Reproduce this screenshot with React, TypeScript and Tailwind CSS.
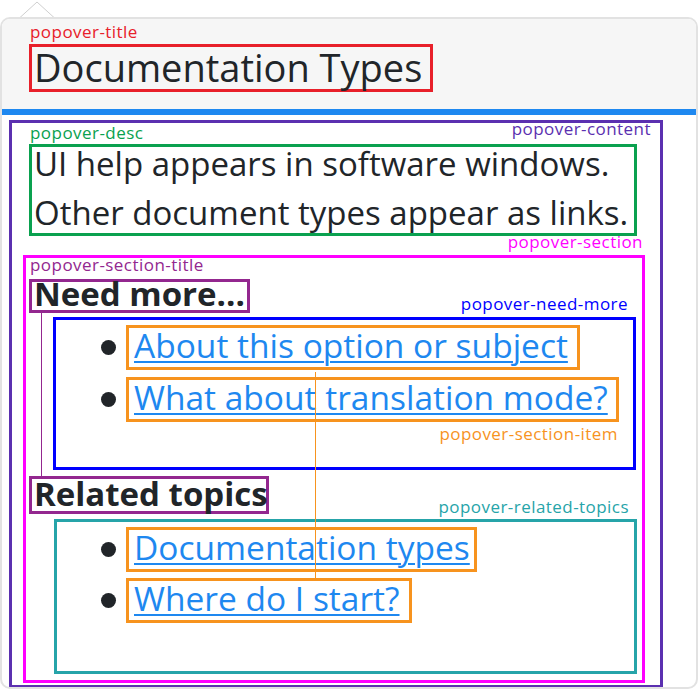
import React from 'react';

type ItemProps = {
  text: string;
  box: string;
  bullet: string;
  children?: React.ReactNode;
};

const label = 'whitespace-nowrap text-[17px] tracking-[0.45px]';

const Item: React.FC<ItemProps> = ({ text, box, bullet, children }) => (
  <li className="flex items-center">
    <span className={`${bullet} mr-[10px] h-[15px] w-[15px] shrink-0 rounded-full bg-[#212529]`} />
    <div className={`relative h-[45px] border-[3px] border-[#f7931e] ${box}`}>
      <a href="#" className="block whitespace-nowrap pl-[5px] text-[33.5px] leading-[35px] text-[#1e88f0] underline decoration-2 underline-offset-[3px]">
        {text}
      </a>
      {children}
    </div>
  </li>
);

const App: React.FC = () => {
  return (
    <div className="relative h-[689px] w-[699px] overflow-hidden bg-white font-['Open_Sans',sans-serif] text-[#212529]">
      {/* pointer arrow */}
      <svg width="60" height="17" className="block">
        <path d="M20 17.5 L37 2 L54 17.5" fill="#ffffff" stroke="#cfcfcf" strokeWidth="1" />
      </svg>

      <div className="h-[672px] w-[698px] overflow-hidden rounded-[10px] border-2 border-[#e2e2e2]">
        {/* header */}
        <header className="h-[90px] bg-[#f6f6f6] pl-[27px]">
          <div className={`${label} h-[25px] pl-[1px] leading-[26px] text-[#e8202a]`}>popover-title</div>
          <div className="h-[48px] w-[404px] border-[3px] border-[#e8202a]">
            <h1 className="whitespace-nowrap pl-[2px] text-[38px] leading-[40px]">Documentation Types</h1>
          </div>
        </header>
        <div className="h-[6px] bg-[#1e88f0]" />

        {/* body */}
        <div className="pl-[7px] pt-[5px]">
          <div className="relative h-[568px] w-[654px] border-[3px] border-[#5b30b0]">
            <div className={`${label} absolute right-[9px] top-[-3px] leading-[17px] text-[#5b30b0]`}>popover-content</div>

            <div className={`${label} h-[21px] pl-[18px] leading-[19px] text-[#0aa14f]`}>popover-desc</div>
            <div className="ml-[17px] h-[92px] w-[608px] border-[3px] border-[#0aa14f] pl-[2px]">
              <div className="-mt-[8px] whitespace-nowrap text-[33px] leading-[49px]">
                <p>UI help appears in software windows.</p>
                <p>Other document types appear as links.</p>
              </div>
            </div>

            {/* section */}
            <div className="relative ml-[11px] mt-[19px] h-[428px] w-[622px] border-[3px] border-[#ff00ff]">
              <div className={`${label} absolute bottom-[calc(100%+8px)] right-[-1px] leading-[17px] text-[#ff00ff]`}>popover-section</div>

              <div className={`${label} h-[21px] pl-[4px] leading-[14px] text-[#93278f]`}>popover-section-title</div>
              <div className="ml-[3px] h-[34px] w-[221px] border-[3px] border-[#93278f]">
                <h2 className="whitespace-nowrap pl-[2px] text-[33px] font-bold leading-[23px]">Need more...</h2>
              </div>

              <div className="relative ml-[27px] mt-[4px] h-[153px] w-[583px] border-[3px] border-[#0000ff] pt-[5px]">
                <div className={`${label} absolute bottom-[calc(100%+8px)] right-[5px] leading-[17px] text-[#0000ff]`}>popover-need-more</div>
                <ul className="flex flex-col gap-[7px]">
                  <Item text="About this option or subject" box="w-[454px]" bullet="ml-[45px]" />
                  <Item text="What about translation mode?" box="w-[493px]" bullet="ml-[45px]">
                    <div className={`${label} absolute right-[-2px] top-[calc(100%+6px)] leading-[17px] text-[#f7931e]`}>
                      popover-section-item
                    </div>
                  </Item>
                </ul>
              </div>

              <div className="ml-[3px] mt-[6px] h-[38px] w-[240px] border-[3px] border-[#93278f]">
                <h2 className="whitespace-nowrap pl-[2px] text-[33px] font-bold leading-[30px]">Related topics</h2>
              </div>

              <div className="relative ml-[28px] mt-[5px] h-[155px] w-[583px] border-[3px] border-[#26a4a9] pt-[5px]">
                <div className={`${label} absolute bottom-[calc(100%+7px)] right-[5px] leading-[17px] text-[#26a4a9]`}>popover-related-topics</div>
                <ul className="flex flex-col gap-[6px]">
                  <Item text="Documentation types" box="w-[351px]" bullet="ml-[44px]" />
                  <Item text="Where do I start?" box="w-[286px]" bullet="ml-[44px]" />
                </ul>
              </div>
            </div>
          </div>
        </div>
      </div>

      {/* leader lines */}
      <div className="absolute left-[41px] top-[313px] h-[163px] w-px bg-[#93278f]" />
      <div className="absolute left-[315px] top-[372px] h-[208px] w-px bg-[#f7931e]" />
    </div>
  );
};

export default App;
